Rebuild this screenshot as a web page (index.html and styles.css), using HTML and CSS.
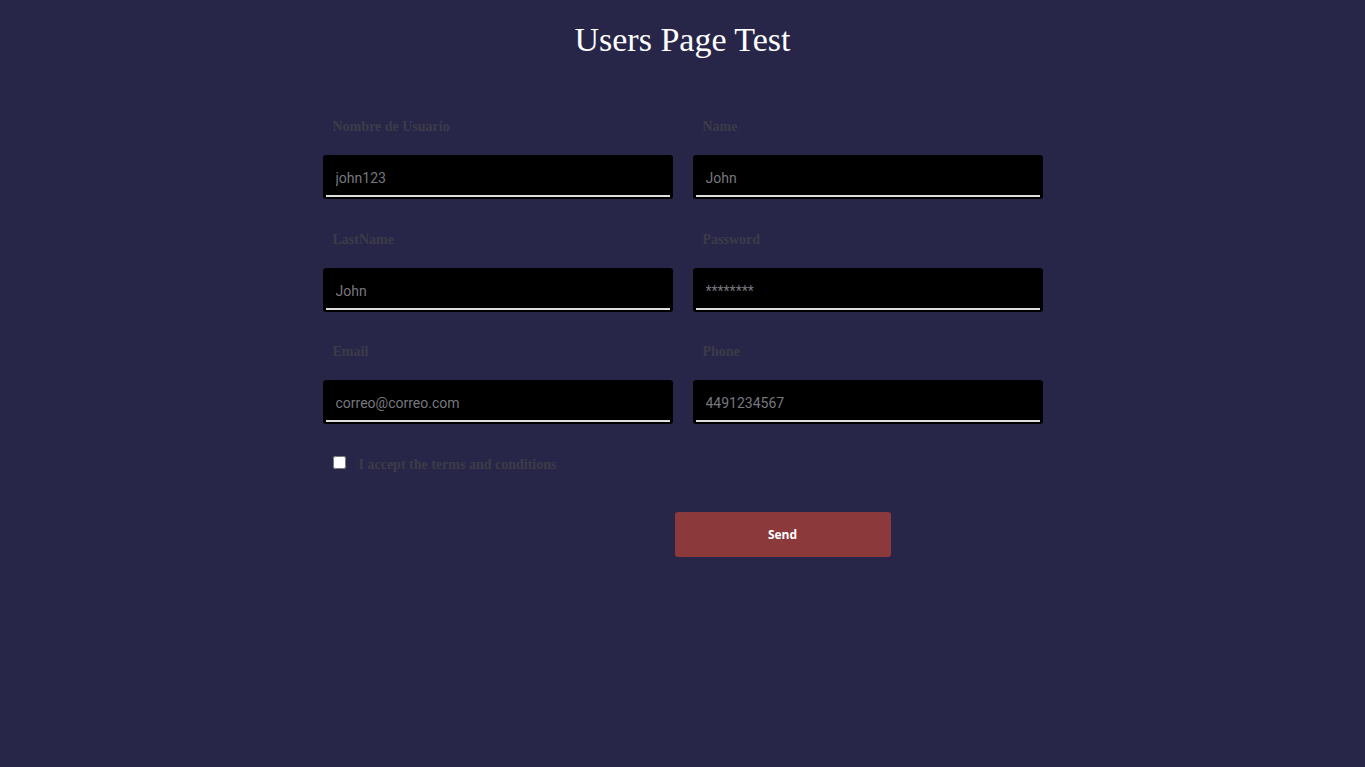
FILE: index.html
```html
<!DOCTYPE html>
<html lang="en">
<head>
<meta charset="utf-8">
<title>Users Page Test</title>
<link rel="stylesheet" href="styles.css">
</head>
<body>
<main class="page">
  <h1 class="title">Users Page Test</h1>
  <form class="form">
    <div class="grid">
      <div class="group">
        <label class="label">Nombre de Usuario</label>
        <div class="field"><input class="input" type="text" value="john123"></div>
      </div>
      <div class="group">
        <label class="label">Name</label>
        <div class="field"><input class="input" type="text" value="John"></div>
      </div>
      <div class="group">
        <label class="label">LastName</label>
        <div class="field"><input class="input" type="text" value="John"></div>
      </div>
      <div class="group">
        <label class="label">Password</label>
        <div class="field"><input class="input" type="text" value="********"></div>
      </div>
      <div class="group">
        <label class="label">Email</label>
        <div class="field"><input class="input" type="text" value="correo@correo.com"></div>
      </div>
      <div class="group">
        <label class="label">Phone</label>
        <div class="field"><input class="input" type="text" value="4491234567"></div>
      </div>
    </div>
    <div class="terms">
      <input class="check" type="checkbox">
      <span class="terms-text">I accept the terms and conditions</span>
    </div>
    <div class="actions">
      <button class="send" type="button">Send</button>
    </div>
  </form>
</main>
</body>
</html>
```
FILE: styles.css
```css
html, body {
  margin: 0;
  padding: 0;
  background: #272648;
  height: 100%;
}
body {
  font-family: "Liberation Serif", "DejaVu Serif", serif;
}
.page {
  display: flex;
  flex-direction: column;
  align-items: center;
  padding-top: 20px;
}
.title {
  margin: 0;
  font-weight: normal;
  font-size: 34px;
  line-height: 40px;
  color: #ffffff;
  font-family: "Liberation Serif", serif;
}
.form {
  width: 720px;
  margin-top: 56px;
}
.grid {
  display: grid;
  grid-template-columns: 350px 350px;
  column-gap: 20px;
  row-gap: 29.5px;
}
.group {
  display: flex;
  flex-direction: column;
}
.label {
  font-size: 14px;
  font-weight: bold;
  color: #3d3b48;
  padding-left: 10px;
  height: 22px;
  line-height: 22px;
  margin-bottom: 17px;
}
.field {
  background: #000;
  border-radius: 3px;
  height: 44px;
  padding: 0 3px 2px;
  box-sizing: border-box;
  display: flex;
}
.input {
  flex: 1;
  background: transparent;
  border: none;
  border-bottom: 2px solid #dedede;
  outline: none;
  color: #77777f;
  font-family: Roboto, "Liberation Sans", sans-serif;
  font-size: 14px;
  padding: 6px 0 0 10px;
  margin: 0;
}
.terms {
  display: flex;
  align-items: center;
  margin-top: 31px;
  padding-left: 10px;
  height: 20px;
}
.check {
  margin: 0 13px 0 0;
  width: 13px;
  height: 13px;
  position: relative;
  top: -3px;
}
.terms-text {
  font-size: 14px;
  font-weight: bold;
  color: #3d3b48;
}
.actions {
  display: flex;
  margin-top: 37px;
  padding-left: 352px;
}
.send {
  width: 216px;
  height: 45px;
  background: #8b393b;
  border: none;
  border-radius: 3px;
  color: #fff;
  font-family: "Open Sans", "Noto Sans", sans-serif;
  font-weight: bold;
  font-size: 12px;
  cursor: pointer;
}
```
